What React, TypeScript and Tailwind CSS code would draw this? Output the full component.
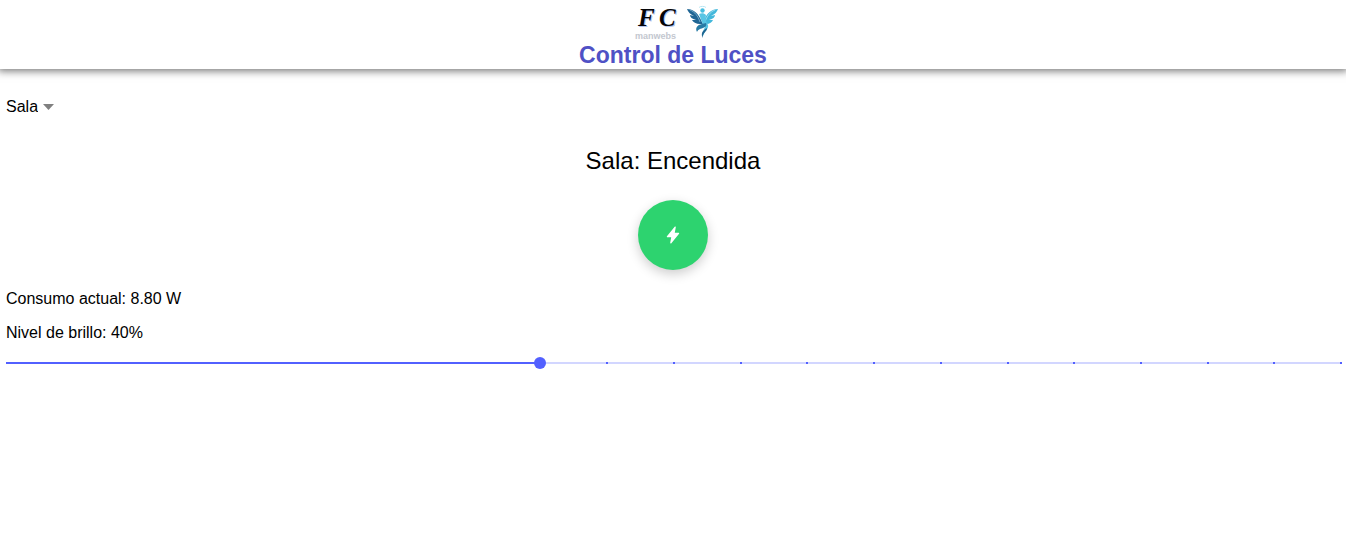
import { useState } from 'react';
import { IoFlash } from 'react-icons/io5';

const rooms = ['Sala', 'Cocina', 'Comedor', 'Cuarto'];
const ticks = Array.from({ length: 21 }, (_, i) => i * 5);

function Logo() {
  return (
    <svg viewBox="0 0 90 40" className="h-10 w-[90px]" role="img" aria-label="FC manwebs">
      <g fontFamily="'Liberation Serif', serif" fontStyle="italic" fontWeight="700" fontSize="25">
        <g fill="#b3c6f0">
          <text x="11" y="25">F</text>
          <text x="32" y="25">C</text>
        </g>
        <g fill="#050508">
          <text x="10" y="24">F</text>
          <text x="31" y="24">C</text>
        </g>
      </g>
      <text x="7" y="37" fontFamily="'Liberation Sans', sans-serif" fontWeight="700" fontSize="9" fill="#c3c7cf">
        manwebs
      </text>
      <g transform="translate(59 3)">
        <path d="M0 4C5 4 10 7 13 13L16 19L13 19C9 19 6 17 5 15L9 15C5 14 3 12 3 10L7 11C3 9 1 7 0 4Z" fill="#1f6594" />
        <path d="M3 5C8 7 11 11 13 17" fill="none" stroke="#a9d4e6" strokeWidth="0.6" />
        <path d="M31 4C26 4 21 7 18 13L16 19L19 19C23 19 25 17 26 15L22 15C26 14 28 12 28 10L24 11C28 9 30 7 31 4Z" fill="#43b8db" />
        <path d="M28 5C23 7 20 11 18 17" fill="none" stroke="#c9edf7" strokeWidth="0.6" />
        <circle cx="15.5" cy="5.5" r="2.2" fill="#48bedf" />
        <path d="M12 2.5C13 1 18 1 19 2.5" fill="none" stroke="#a6dff0" strokeWidth="0.8" />
        <path d="M12 9C15 7.500 17 8 19 10C18 14 19 17 21 20C22 24 18 25 16 31C15 27 17 24 18 22C15 19 14 14 12 9Z" fill="#58c5e4" />
        <path d="M15 19C10 20 8 23 10 27C11 25 12 24 16 23C19 22 20 20 19 18" fill="#277ba5" />
        <path d="M20 23C20 27 16 27 15.500 33C14 28 15 26 20 23Z" fill="#1e6591" />
      </g>
    </svg>
  );
}

export default function App() {
  const [room, setRoom] = useState('Sala');
  const [on, setOn] = useState(true);
  const [level, setLevel] = useState(40);

  return (
    <div className="min-h-screen bg-white font-['Liberation_Sans',Arial,sans-serif] text-base text-black">
      <header className="flex flex-col items-center pt-0.5 shadow-[0_0_8px_2px_rgba(0,0,0,0.55)]">
        <Logo />
        <h1 className="text-[23px] leading-[27px] font-bold text-[#4f51c5]">Control de Luces</h1>
      </header>

      <main className="flex flex-col pt-[26px]">
        <div className="flex items-center gap-1 px-1.5">
          <select
            aria-label="Habitación"
            value={room}
            onChange={(e) => setRoom(e.target.value)}
            className="field-sizing-content appearance-none bg-transparent leading-6"
          >
            {rooms.map((name) => (
              <option key={name}>{name}</option>
            ))}
          </select>
          <svg viewBox="0 0 12 6" className="h-1.5 w-3" aria-hidden="true">
            <path d="M1 0H12L6.500 6Z" fill="#808080" />
          </svg>
        </div>

        <h2 className="mt-[26px] text-center text-2xl leading-8">
          {room}: {on ? 'Encendida' : 'Apagada'}
        </h2>

        <button
          type="button"
          aria-label="Encender o apagar"
          aria-pressed={on}
          onClick={() => setOn(!on)}
          className="mt-[23px] flex size-[70px] items-center justify-center self-center rounded-full bg-[#2dd36f] text-white shadow-[0_4px_12px_0_rgba(0,0,0,0.2)]"
        >
          <IoFlash className="size-[18px]" />
        </button>

        <p className="mt-[17px] px-1.5 leading-6">Consumo actual: 8.80 W</p>
        <label htmlFor="brightness" className="mt-2.5 px-1.5 leading-6">
          Nivel de brillo: {level}%
        </label>

        <div className="relative mt-1.5 flex h-6 items-center px-1.5">
          <div className="relative h-0.5 w-full bg-[#d2d6ff]">
            <div className="h-full bg-[#5260ff]" style={{ width: `${level}%` }} />
            {ticks.map((tick) => (
              <span
                key={tick}
                className="absolute top-0 h-0.5 w-0.5 bg-[#5260ff]"
                style={{ left: `${tick}%` }}
              />
            ))}
          </div>
          <input
            id="brightness"
            type="range"
            min={0}
            max={100}
            step={5}
            value={level}
            onChange={(e) => setLevel(Number(e.target.value))}
            className="absolute inset-0 h-full w-full cursor-pointer appearance-none bg-transparent [&::-webkit-slider-thumb]:size-3 [&::-webkit-slider-thumb]:appearance-none [&::-webkit-slider-thumb]:rounded-full [&::-webkit-slider-thumb]:bg-[#5260ff]"
          />
        </div>
      </main>
    </div>
  );
}
